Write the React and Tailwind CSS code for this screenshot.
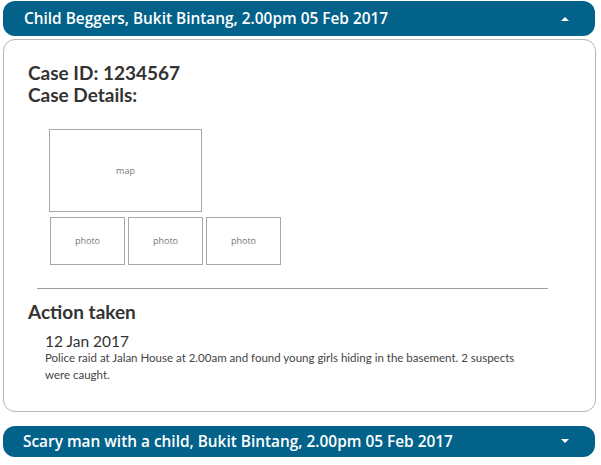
export default function App() {
  const Caret = ({ up }) => (
    <svg width="8" height="5" viewBox="0 0 8 5" className="shrink-0">
      {up ? <path d="M0 5 L4 1 L8 5 Z" fill="#fff" /> : <path d="M0 0 L4 4 L8 0 Z" fill="#fff" />}
    </svg>
  );
  return (
    <div className="w-[601px] h-[465px] bg-white px-[3px] pt-[1px] flex flex-col">
      <div className="h-[35px] w-[592px] rounded-[12px] bg-[#03628a] flex items-center justify-between pl-[21px] pr-[26px]">
        <span className="text-white text-[15.4px] font-semibold" style={{ fontFamily: '"Open Sans", sans-serif' }}>
          Child Beggers, Bukit Bintang, 2.00pm 05 Feb 2017
        </span>
        <Caret up />
      </div>
      <div className="mt-[3px] h-[373px] w-[593px] rounded-[12px] border border-[#b5b5b5] text-[#333]" style={{ fontFamily: 'Lato, sans-serif' }}>
        <div className="pl-[24px] pt-[22px] text-[19px] font-bold leading-[22px]">
          <div>Case ID: 1234567</div>
          <div>Case Details:</div>
        </div>
        <div className="ml-[45px] mt-[23px] flex flex-col gap-[5px]">
          <div className="w-[153px] h-[83px] border border-[#a8a8a8] flex items-center justify-center text-[9px] text-[#777]" style={{ fontFamily: '"Open Sans", sans-serif' }}>map</div>
          <div className="flex gap-[3px] pl-[1px]">
            {[0, 1, 2].map((i) => (
              <div key={i} className="w-[75px] h-[48px] border border-[#a8a8a8] flex items-center justify-center text-[9px] text-[#777]" style={{ fontFamily: '"Open Sans", sans-serif' }}>photo</div>
            ))}
          </div>
        </div>
        <div className="ml-[33px] mr-[47px] mt-[23px] border-t border-[#a0a0a0]" />
        <div className="pl-[24px] mt-[12px] text-[19px] font-bold leading-[21px]">Action taken</div>
        <div className="pl-[41px] mt-[11px]">
          <div className="text-[15.5px] leading-[16px]">12 Jan 2017</div>
          <div className="text-[11.5px] leading-[17px] text-[#444] w-[478px]">
            Police raid at Jalan House at 2.00am and found young girls hiding in the basement. 2 suspects were caught.
          </div>
        </div>
      </div>
      <div className="mt-[14px] h-[31px] w-[592px] rounded-[12px] bg-[#03628a] flex items-center justify-between pl-[20px] pr-[26px]">
        <span className="text-white text-[15.4px] font-semibold" style={{ fontFamily: '"Open Sans", sans-serif' }}>
          Scary man with a child, Bukit Bintang, 2.00pm 05 Feb 2017
        </span>
        <Caret />
      </div>
    </div>
  );
}
